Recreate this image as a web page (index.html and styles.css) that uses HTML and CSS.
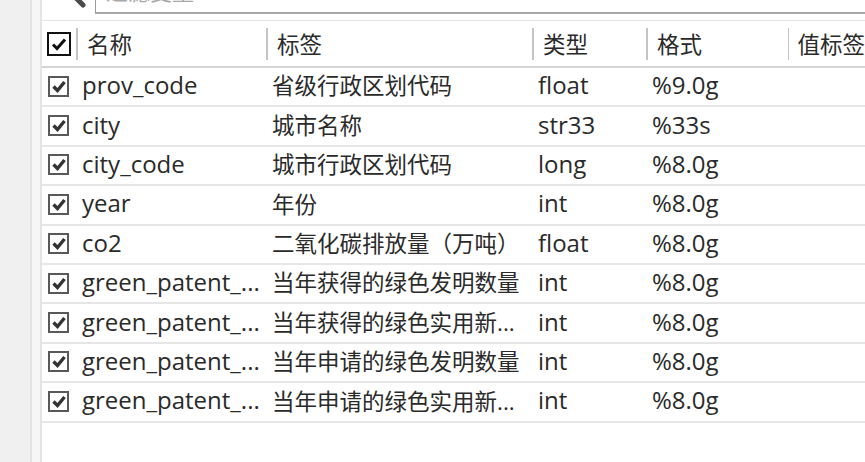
FILE: index.html
```html
<!DOCTYPE html>
<html lang="zh-CN">
<head>
<meta charset="UTF-8">
<title>变量</title>
<link rel="stylesheet" href="styles.css">
</head>
<body>

<div class="app">
    <div class="gutter"></div>
    <div class="strip"></div>
    <div class="panel">
        <div class="filter">
            <svg class="search" width="30" height="30" viewBox="0 0 30 30">
                <circle cx="10" cy="10" r="8" fill="none" stroke="#555" stroke-width="2.5"/>
                <line x1="16" y1="16" x2="26" y2="26" stroke="#4a4a4a" stroke-width="5" stroke-linecap="round"/>
            </svg>
            <div class="filter-box">过滤变量</div>
        </div>

        <div class="grid">
            <div class="row head">
                <div class="cell first">
                    <span class="box big">
                        <svg width="16" height="14" viewBox="0 0 16 14"><path d="M2 7.5 L6 11.5 L14 2.5" fill="none" stroke="#111" stroke-width="3"/></svg>
                    </span>
                    <span class="div"></span>
                    <span>名称</span>
                </div>
                <div class="cell"><span class="div"></span><span>标签</span></div>
                <div class="cell"><span class="div"></span><span>类型</span></div>
                <div class="cell"><span class="div"></span><span>格式</span></div>
                <div class="cell"><span class="div"></span><span>值标签</span></div>
            </div>
        </div>
        <div class="grid" id="rows"></div>
    </div>
</div>

<script>
    const vars = [
        ['prov_code', '省级行政区划代码', 'float', '%9.0g'],
        ['city', '城市名称', 'str33', '%33s'],
        ['city_code', '城市行政区划代码', 'long', '%8.0g'],
        ['year', '年份', 'int', '%8.0g'],
        ['co2', '二氧化碳排放量（万吨）', 'float', '%8.0g'],
        ['green_patent_...', '当年获得的绿色发明数量', 'int', '%8.0g'],
        ['green_patent_...', '当年获得的绿色实用新...', 'int', '%8.0g'],
        ['green_patent_...', '当年申请的绿色发明数量', 'int', '%8.0g'],
        ['green_patent_...', '当年申请的绿色实用新...', 'int', '%8.0g']
    ];

    const rows = document.getElementById('rows');
    const check = '<svg width="14" height="13" viewBox="0 0 14 13"><path d="M1.5 6.5 L5.5 10.5 L12.5 2" fill="none" stroke="#333" stroke-width="3.4"/></svg>';

    vars.forEach(v => {
        const row = document.createElement('div');
        row.className = 'row';
        row.innerHTML =
            '<div class="cell first"><span class="box">' + check + '</span><span class="en">' + v[0] + '</span></div>' +
            '<div class="cell zh"><span>' + v[1] + '</span></div>' +
            '<div class="cell"><span class="en">' + v[2] + '</span></div>' +
            '<div class="cell"><span class="en">' + v[3] + '</span></div>' +
            '<div class="cell"></div>';
        rows.appendChild(row);
    });
</script>

</body>
</html>
```

FILE: styles.css
```css
body {
    margin: 0;
    padding: 0;
    background: #f0f0f0;
    font-family: "Open Sans", "Noto Sans CJK SC", sans-serif;
    color: #2a2a2a;
    overflow: hidden;
}
.app {
    display: flex;
    height: 462px;
}
.gutter {
    width: 30px;
    background: #f0f0f0;
    border-right: 2px solid #e2e2e2;
}
.strip {
    width: 8px;
    background: #f6f6f6;
}
.panel {
    flex: 1;
    background: #fff;
    border-left: 2px solid #e4e4e4;
    overflow: hidden;
}
.filter {
    height: 15px;
    display: flex;
    align-items: flex-end;
    overflow: hidden;
    margin-bottom: 5px;
}
.search {
    flex: none;
    margin-left: 15px;
    margin-bottom: 6px;
}
.filter-box {
    flex: 1;
    margin-left: 8px;
    margin-bottom: 1px;
    height: 40px;
    box-sizing: border-box;
    border-left: 1px solid #9c9c9c;
    border-bottom: 2px solid #a8a8a8;
    padding: 2px 0 0 10px;
    font-size: 22px;
    color: #a8a8a8;
    line-height: 30px;
}
.row {
    display: grid;
    grid-template-columns: 224px 266px 114px 142px 1fr;
    height: 37.4px;
    border-bottom: 2px solid #e6e6e6;
    font-size: 22.5px;
    line-height: 1;
}
.row.head {
    height: 45px;
    border-top: 1px solid #e4e4e4;
    border-bottom: 2px solid #d4d4d4;
}
.cell {
    display: flex;
    align-items: center;
    padding-left: 6px;
    padding-bottom: 3px;
    white-space: nowrap;
    overflow: hidden;
}
.cell.zh {
    padding-bottom: 0;
}
.en {
    font-size: 24px;
}
.head .cell {
    padding-left: 0;
    padding-bottom: 0;
}
.head .cell > span:last-child {
    padding-top: 3px;
}
.head .cell .div {
    width: 2px;
    height: 32px;
    background: #c4c4c4;
    margin-right: 9px;
}
.head .cell.first {
    padding-left: 5px;
}
.head .cell.first .div {
    margin-left: 5px;
}
.box {
    flex: none;
    width: 21px;
    height: 21px;
    box-sizing: border-box;
    border: 2px solid #595959;
    display: flex;
    align-items: center;
    justify-content: center;
    margin-right: 13px;
    margin-top: 2px;
}
.box.big {
    width: 24px;
    height: 24px;
    border-color: #111;
    margin-right: 0;
    margin-top: 0;
}
```
